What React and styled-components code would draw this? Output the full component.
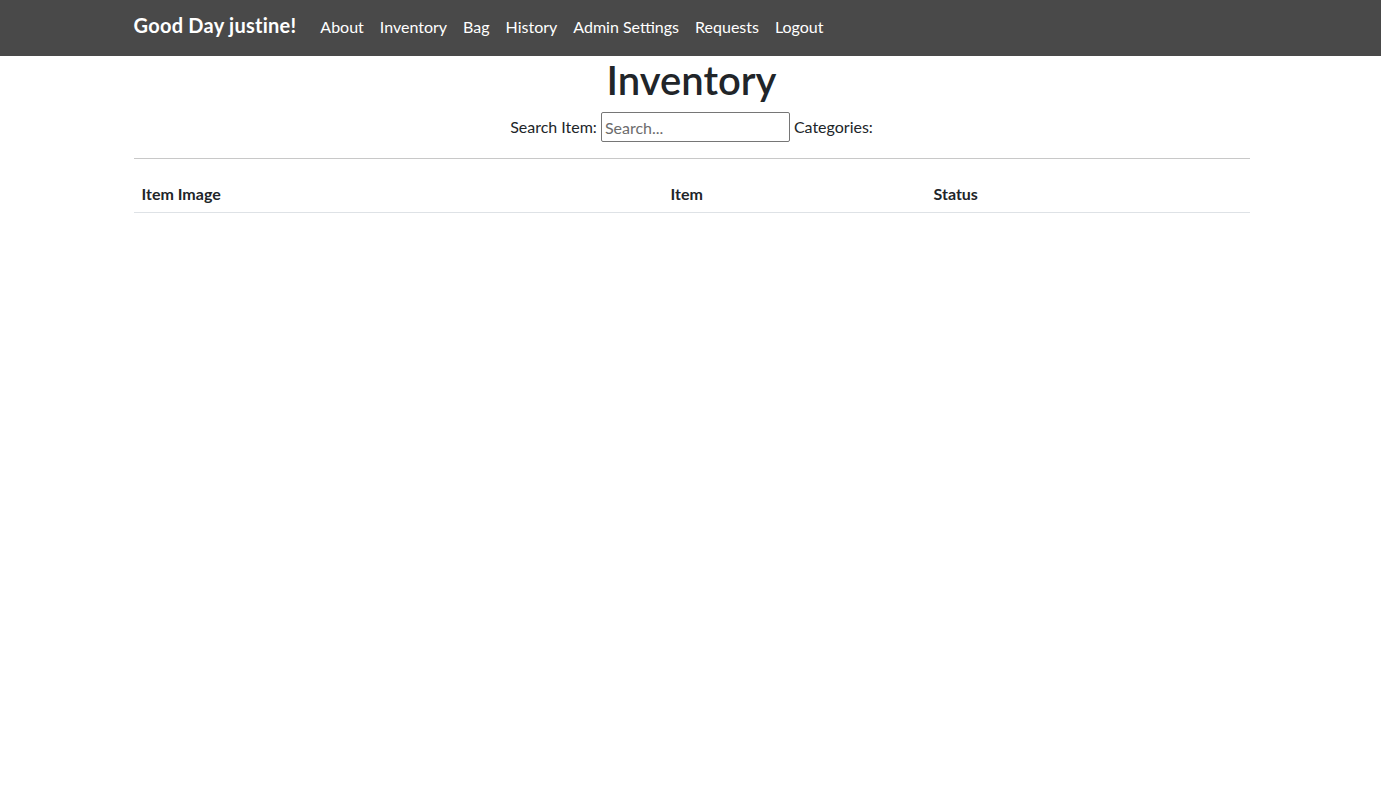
import styled, { createGlobalStyle } from "styled-components";

const GlobalStyle = createGlobalStyle`
  body {
    margin: 0;
    font-family: Lato, "Segoe UI", "Noto Sans", sans-serif;
    font-size: 16px;
    line-height: 1.5;
    color: #212529;
    background: #fff;
  }
  * {
    box-sizing: border-box;
  }
`;

const NAV_LINKS = [
  "About",
  "Inventory",
  "Bag",
  "History",
  "Admin Settings",
  "Requests",
  "Logout"
];

export default function App() {
  return (
    <>
      <GlobalStyle />
      <Navbar>
        <Container>
          <Brand href="#">Good Day justine!</Brand>
          <NavList>
            {NAV_LINKS.map((link) => (
              <li key={link}>
                <NavLink href="#">{link}</NavLink>
              </li>
            ))}
          </NavList>
        </Container>
      </Navbar>

      <Main>
        <Title>Inventory</Title>
        <SearchRow>
          <label htmlFor="search">Search Item:</label>
          <SearchInput id="search" type="text" placeholder="Search..." />
          <span>Categories:</span>
        </SearchRow>
        <Divider />
        <Table>
          <thead>
            <tr>
              <HeadCell $width="529px">Item Image</HeadCell>
              <HeadCell $width="263px">Item</HeadCell>
              <HeadCell>Status</HeadCell>
            </tr>
          </thead>
          <tbody></tbody>
        </Table>
      </Main>
    </>
  );
}

const Navbar = styled.nav`
  background-color: #494949;
  height: 56px;
`;

const Container = styled.div`
  width: 1118px;
  margin: 0 auto;
  padding-left: 2px;
  height: 100%;
  display: flex;
  align-items: center;
`;

const Brand = styled.a`
  color: #fff;
  font-size: 20px;
  font-weight: 700;
  letter-spacing: 0.25px;
  text-decoration: none;
  margin-right: 16px;
  margin-top: -6px;
`;

const NavList = styled.ul`
  display: flex;
  list-style: none;
  margin: 0;
  padding: 0;
`;

const NavLink = styled.a`
  display: block;
  padding: 7px 8px 9px;
  color: #fff;
  text-decoration: none;
  font-size: 16px;
`;

const Main = styled.main`
  width: 1118px;
  margin: 0 auto;
  padding-left: 2px;
  text-align: center;
`;

const Title = styled.h1`
  margin: 0 0 8px;
  font-size: 40px;
  font-weight: 600;
  line-height: 1.2;
`;

const SearchRow = styled.div`
  display: flex;
  justify-content: center;
  align-items: center;
  gap: 4px;
  height: 30px;
`;

const SearchInput = styled.input`
  width: 189px;
  height: 30px;
  border: 1px solid #767676;
  border-radius: 2px;
  padding: 1px 3px;
  font-family: inherit;
  font-size: 16px;
  color: #212529;

  &::placeholder {
    color: #6c6c6c;
  }
`;

const Divider = styled.hr`
  margin: 16px 0 13px;
  border: 0;
  border-top: 1px solid #c8c8c8;
`;

const Table = styled.table`
  width: 100%;
  border-collapse: collapse;
  text-align: left;
`;

const HeadCell = styled.th`
  width: ${(p) => p.$width || "auto"};
  padding: 10px 8px 6px;
  font-weight: 700;
  border-bottom: 1px solid #dee2e6;
`;
